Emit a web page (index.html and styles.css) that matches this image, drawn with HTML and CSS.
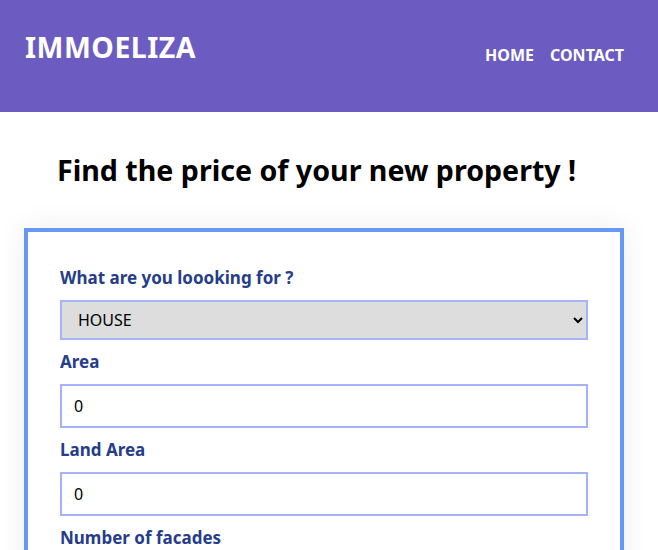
FILE: index.html
```html
<!DOCTYPE html>
<html lang="en">
<head>
<meta charset="utf-8">
<title>ImmoEliza</title>
<link rel="stylesheet" href="styles.css">
</head>
<body>
<header class="topbar">
  <div class="logo">IMMOELIZA</div>
  <nav class="nav">
    <a href="#" class="nav-link">HOME</a>
    <a href="#" class="nav-link">CONTACT</a>
  </nav>
</header>
<main class="content">
  <h1 class="title">Find the price of your new property !</h1>
  <form class="card">
    <label class="field-label" for="type">What are you loooking for ?</label>
    <select id="type" class="field select">
      <option>HOUSE</option>
      <option>APARTMENT</option>
    </select>
    <label class="field-label" for="area">Area</label>
    <input id="area" class="field input" type="text" value="0">
    <label class="field-label" for="land">Land Area</label>
    <input id="land" class="field input" type="text" value="0">
    <label class="field-label" for="facades">Number of facades</label>
    <input id="facades" class="field input" type="text" value="0">
  </form>
</main>
</body>
</html>
```

FILE: styles.css
```css
* { box-sizing: border-box; }
html, body { margin: 0; padding: 0; background: #fff; }
body {
  font-family: "Noto Sans", "DejaVu Sans", sans-serif;
  color: #000;
  overflow: hidden;
}
.topbar {
  background: #6c5cc2;
  height: 112px;
  display: flex;
  justify-content: space-between;
  align-items: flex-start;
  padding: 0 34px 0 25px;
}
.logo {
  color: #fff;
  font-weight: 700;
  font-size: 28.5px;
  line-height: 1;
  margin-top: 33px;
  letter-spacing: 0.5px;
}
.nav {
  display: flex;
  gap: 16px;
  margin-top: 45px;
}
.nav-link {
  color: #fff;
  text-decoration: none;
  font-weight: 700;
  font-size: 16px;
  line-height: 20px;
}
.content { padding: 0; }
.title {
  margin: 38px 0 0 57px;
  font-size: 28.6px;
  line-height: 40px;
  font-weight: 700;
}
.card {
  margin: 38px 0 0 24px;
  width: 600px;
  border: 4px solid #6699f5;
  padding: 36px 32px 40px;
  box-shadow: 0 0 30px rgba(0, 0, 0, 0.07);
  display: flex;
  flex-direction: column;
}
.field-label {
  color: #253d8a;
  font-weight: 700;
  font-size: 17px;
  line-height: 20px;
  margin: 0 0 12px;
}
.field {
  width: 528px;
  border: 2px solid #a3b2fb;
  font-family: "Noto Sans", "DejaVu Sans", sans-serif;
  font-size: 16px;
  color: #000;
  margin-bottom: 12px;
  border-radius: 0;
  outline: none;
}
.select {
  height: 40px;
  background: #dddddd;
  padding: 0 12px;
}
.input {
  height: 44px;
  background: #fff;
  padding: 0 12px;
}
```
